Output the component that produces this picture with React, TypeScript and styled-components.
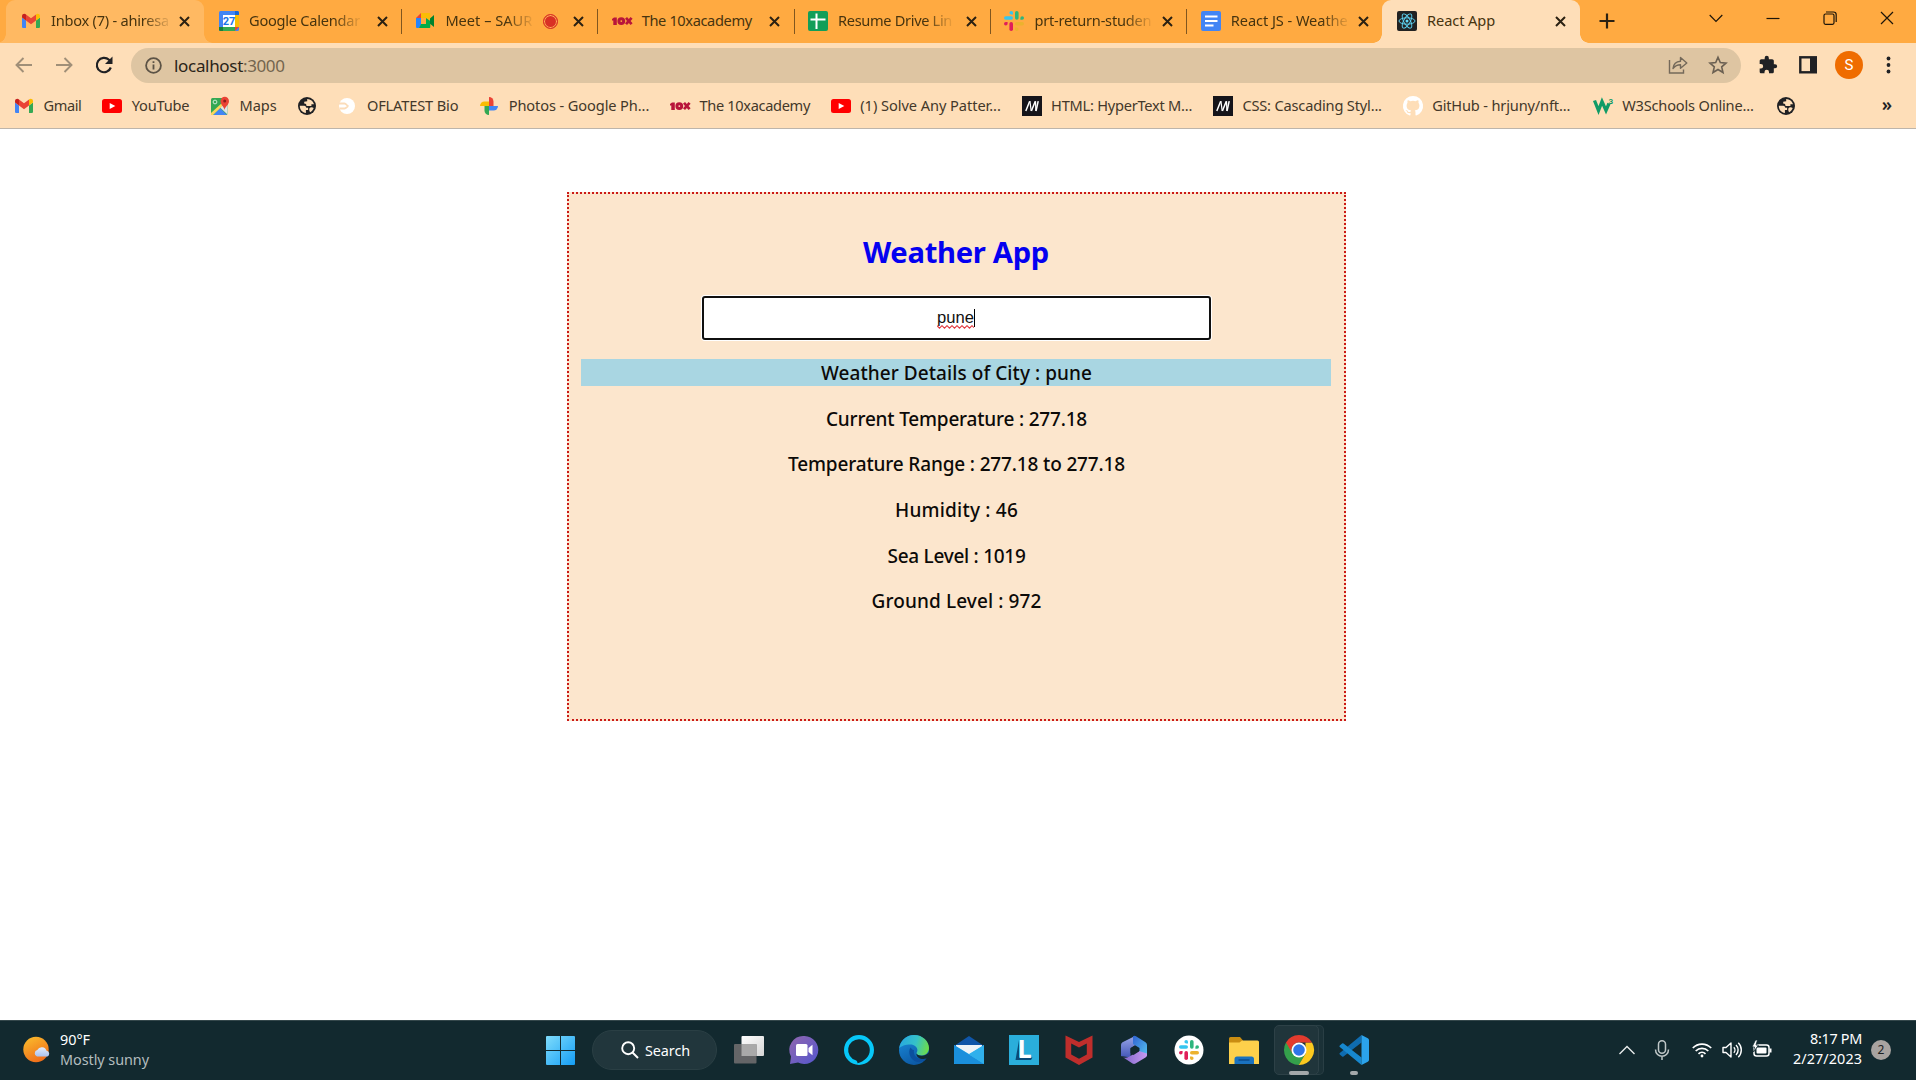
import React, { useLayoutEffect, useRef, useState } from "react";
import styled, { createGlobalStyle } from "styled-components";

const uiFont = `"Segoe UI", "Noto Sans", "Open Sans", sans-serif`;

const GlobalStyle = createGlobalStyle`
  * { box-sizing: border-box; }
  html, body { margin: 0; padding: 0; }
  body { background: #fff; font-family: ${uiFont}; overflow: hidden; }
`;

/* ---------- text that keeps a fixed measure by adjusting its tracking ---------- */

const Measure = styled.span<{ $width: number }>`
  display: block;
  flex: none;
  width: ${(p) => p.$width}px;
  white-space: nowrap;
`;

const Tracked = styled.span`
  display: inline-block;
  white-space: pre;
`;

function FitText({ children, width }: { children: string; width: number }) {
  const ref = useRef<HTMLSpanElement>(null);
  const [spacing, setSpacing] = useState(0);
  useLayoutEffect(() => {
    if (ref.current) {
      const natural = ref.current.getBoundingClientRect().width;
      setSpacing((width - natural) / children.length);
    }
  }, [children, width]);
  return (
    <Measure $width={width}>
      <Tracked ref={ref} style={{ letterSpacing: `${spacing}px` }}>
        {children}
      </Tracked>
    </Measure>
  );
}

/* ---------- site icons ---------- */

const Svg = styled.svg<{ $size: number }>`
  display: block;
  flex: none;
  overflow: visible;
  width: ${(p) => p.$size}px;
  height: ${(p) => p.$size}px;
`;

type IconName =
  | "gmail" | "calendar" | "meet" | "tenx" | "sheets" | "slack" | "docs" | "react"
  | "youtube" | "maps" | "globe" | "oflatest" | "photos" | "mdn" | "github" | "w3";

const SlackMark = () => (
  <>
    <g fill="#36c5f0">
      <rect x="0" y="5.3" width="9" height="3.5" rx="1.75" />
      <path d="M7.2 0A1.8 1.8 0 0 1 9 1.8v1.8H7.2A1.8 1.8 0 0 1 7.2 0z" />
    </g>
    <g fill="#2eb67d">
      <rect x="11" y="0" width="3.6" height="8.8" rx="1.8" />
      <path d="M20 7A1.8 1.8 0 0 1 18.2 8.8h-1.8V7A1.8 1.8 0 0 1 20 7z" />
    </g>
    <g fill="#ecb22e">
      <rect x="11" y="11" width="9" height="3.6" rx="1.8" />
      <path d="M12.8 20A1.8 1.8 0 0 1 11 18.2v-1.8h1.8a1.8 1.8 0 0 1 0 3.6z" />
    </g>
    <g fill="#e01e5a">
      <rect x="5.4" y="11" width="3.6" height="9" rx="1.8" />
      <path d="M0 12.8A1.8 1.8 0 0 1 1.8 11h1.8v1.8a1.8 1.8 0 0 1-3.6 0z" />
    </g>
  </>
);

const drawings: Record<IconName, React.ReactNode> = {
  gmail: (
    <>
      <path fill="#4285f4" d="M1 6.5v9.2c0 .7.6 1.3 1.3 1.3H5V9.5z" />
      <path fill="#34a853" d="M19 6.5v9.2c0 .7-.6 1.3-1.3 1.3H15V9.5z" />
      <path fill="#c5221f" d="M1 5.2C1 3 3.5 2.200 5 3.400V9.500L1 6.500z" />
      <path fill="#fbbc04" d="M19 5.200C19 3 16.500 2.200 15 3.400V9.500l4-3z" />
      <path fill="#ea4335" d="M5 3.400l5 3.800 5-3.800v6.100l-5 3.800-5-3.800z" />
    </>
  ),
  calendar: (
    <>
      <rect width="20" height="20" rx="1.500" fill="#4285f4" />
      <path fill="#1967d2" d="M16 0h2.500A1.500 1.500 0 0 1 20 1.500V4h-4z" />
      <path fill="#fbbc04" d="M16 4h4v12h-4z" />
      <path fill="#34a853" d="M4 16h12v4H4z" />
      <path fill="#188038" d="M0 16h4v4H1.500A1.500 1.500 0 0 1 0 18.500z" />
      <path fill="#ea4335" d="M16 16h4l-4 4z" />
      <path fill="#fff" d="M4 4h12v12H4z" />
      <text x="10" y="14" fontSize="11" fontWeight="700" fontFamily="Roboto, sans-serif" textAnchor="middle" fill="#1a73e8">27</text>
    </>
  ),
  meet: (
    <>
      <path fill="#ea4335" d="M1 7l5-5v5z" />
      <path fill="#fbbc04" d="M6 2h8a1.300 1.300 0 0 1 1.300 1.300V9L11 7H6z" />
      <path fill="#2684fc" d="M1 7h5v7l-2 3H2a1 1 0 0 1-1-1z" />
      <path fill="#00ac47" d="M6 13h5V7l4.300 3v6a1 1 0 0 1-1.300 1H4z" />
      <path fill="#00832d" d="M15 7.500l4-3.500v12l-4-3.300z" />
    </>
  ),
  tenx: (
    <>
      <path fill="#b8153a" d="M0 8l2-1.500h2.800v7.500H1.300V9.500H0z" />
      <path fill="#b8153a" fillRule="evenodd" d="M9.300 6.200a3.900 3.900 0 1 1 0 7.800 3.900 3.900 0 0 1 0-7.800zm0 3a.9.900 0 1 0 0 1.800.9.900 0 0 0 0-1.800z" />
      <path stroke="#b8153a" strokeWidth="2.700" d="M14 6.800l5.600 6.400m0-6.400L14 13.200" />
    </>
  ),
  sheets: (
    <>
      <rect width="20" height="20" rx="2" fill="#129e58" />
      <path stroke="#fff" strokeWidth="2" d="M8.500 2.500v15.500M2.500 8.500h15" />
    </>
  ),
  slack: <SlackMark />,
  docs: (
    <>
      <rect width="20" height="20" rx="2" fill="#4285f4" />
      <path stroke="#fff" strokeWidth="2" d="M4 5.500h12.500M4 10h12.500M4 14.600h8.500" />
    </>
  ),
  react: (
    <>
      <rect width="20" height="20" rx="2" fill="#222" />
      <g fill="none" stroke="#61dafb" strokeWidth=".9">
        <ellipse cx="10" cy="10" rx="8" ry="3.200" />
        <ellipse cx="10" cy="10" rx="8" ry="3.200" transform="rotate(60 10 10)" />
        <ellipse cx="10" cy="10" rx="8" ry="3.200" transform="rotate(120 10 10)" />
      </g>
      <circle cx="10" cy="10" r="1.500" fill="#61dafb" />
    </>
  ),
  youtube: (
    <>
      <rect y="3" width="20" height="14" rx="2.500" fill="#f00" />
      <path fill="#fff" d="M7.700 7l5.600 3-5.600 3z" />
    </>
  ),
  maps: (
    <>
      <rect x="1" y="2" width="16.500" height="17" rx="1.500" fill="#34a853" />
      <path fill="#4285f4" d="M3 19l7-7 7 7z" />
      <path fill="#dfe3e8" d="M10 11.500l7.500 7V9L14 8z" />
      <path fill="#fbd75b" d="M1 17L13 6l1.500 2L3 19H1z" />
      <circle cx="5" cy="6" r="1.900" fill="none" stroke="#cdeed6" strokeWidth="1" />
      <path fill="#ea4335" d="M14.500 14c-.4-3.500-4-5-4-9a4.200 4.200 0 0 1 8.500 0c0 4-4 5.500-4.500 9z" />
      <circle cx="14.700" cy="5" r="1.500" fill="#8c1d18" />
    </>
  ),
  globe: (
    <>
      <circle cx="10" cy="10" r="9" fill="#202124" />
      <path fill="#fedeb8" d="M2.800 9.800h4.400c1.400 0 2 1 2 2h1.900v2.300H8.900v2.900C5.500 16.700 2.700 13.700 2.800 9.800z" />
      <path fill="#fedeb8" d="M10.200 2.900c3.300.1 6 2.400 6.800 5.300h-2.600v1.900h-3.500c-1.600 0-2-1-1.700-2.100l-2-.5V5.700l3-.4z" />
      <path fill="#fedeb8" d="M12.500 12.300c1-1.300 2.800-1.100 4.200-.3-.6 1.900-1.900 3.400-3.600 4.300-.8-1.300-1.100-2.900-.6-4z" />
    </>
  ),
  oflatest: (
    <>
      <circle cx="10" cy="10" r="8" fill="#fff" />
      <path fill="none" stroke="#fbdcb9" strokeWidth="1.800" d="M1.500 7.500h6c2 0 2 2.300 4 2.500-1.500 0-2 2.500-4 2.500h-5" />
    </>
  ),
  photos: (
    <>
      <path fill="#ea4335" d="M10 10V1a4.500 4.500 0 0 1 4.500 4.500V10z" />
      <path fill="#4285f4" d="M10 10h9a4.500 4.500 0 0 1-4.500 4.500H10z" />
      <path fill="#34a853" d="M10 10v9a4.500 4.500 0 0 1-4.500-4.500V10z" />
      <path fill="#fbbc04" d="M10 10H1a4.500 4.500 0 0 1 4.500-4.500H10z" />
    </>
  ),
  mdn: (
    <>
      <rect width="20" height="20" fill="#15141a" />
      <g stroke="#fff">
        <path strokeWidth="1.500" d="M3.800 15L7.700 5.200M9.400 15l3.900-9.800" />
        <path strokeWidth="1.200" d="M7.900 5.200L9.200 15M13.500 5.200L13.900 15" />
        <path strokeWidth="1.500" d="M16.200 5.200L14 15" />
      </g>
    </>
  ),
  github: (
    <path
      fill="#fff"
      d="M10 0a10 10 0 0 0-3.200 19.500c.5.100.7-.2.700-.5v-1.900c-2.800.6-3.400-1.200-3.400-1.200-.4-1.100-1.100-1.400-1.100-1.400-.9-.6.100-.6.100-.6 1 .1 1.500 1 1.500 1 .9 1.600 2.400 1.100 2.900.9.100-.7.400-1.100.7-1.400-2.300-.2-4.600-1.100-4.600-4.900 0-1.100.4-2 1-2.700-.1-.2-.4-1.300.1-2.600 0 0 .8-.3 2.700 1a9.500 9.500 0 0 1 5.200 0c1.900-1.300 2.700-1 2.700-1 .5 1.300.2 2.400.1 2.600.6.700 1 1.600 1 2.700 0 3.800-2.300 4.700-4.600 4.900.4.300.7.900.7 1.900V19c0 .3.200.6.700.5A10 10 0 0 0 10 0z"
    />
  ),
  w3: (
    <>
      <path fill="none" stroke="#109b66" strokeWidth="3.300" d="M1.500 4.500l4 10L9 5.500l4 9 3-7" />
      <text x="15.500" y="7.500" fontSize="8" fontWeight="700" fontFamily="Roboto, sans-serif" fill="#109b66">3</text>
    </>
  ),
};

const SiteIcon = ({ name }: { name: IconName }) => (
  <Svg $size={20} viewBox="0 0 20 20">{drawings[name]}</Svg>
);

/* ---------- browser ---------- */

const Screen = styled.div`
  width: 1916px;
  height: 1080px;
  display: flex;
  flex-direction: column;
  overflow: hidden;
  background: #fff;
`;

const TabStrip = styled.div`
  height: 43px;
  flex: none;
  display: flex;
  padding-left: 5px;
  background: #ffaa41;
`;

const Tab = styled.div<{ $tone?: string }>`
  width: 196.350px;
  flex: none;
  height: 43px;
  display: flex;
  align-items: center;
  position: relative;
  padding: 0 0 1px 16px;
  font-size: 14.600px;
  line-height: 20px;
  color: #47340f;
  isolation: isolate;

  &:first-child { margin-right: 1.700px; }

  &::before {
    content: "";
    display: ${(p) => (p.$tone ? "block" : "none")};
    position: absolute;
    z-index: -1;
    inset: 0 -3px 0 1px;
    border-radius: 9px 9px 0 0;
    background: ${(p) => p.$tone};
  }
  &::after {
    content: "";
    display: ${(p) => (p.$tone ? "block" : "none")};
    position: absolute;
    z-index: -1;
    left: -8px;
    right: -12px;
    bottom: 0;
    height: 9px;
    background:
      radial-gradient(circle at 0 0, transparent 8.500px, ${(p) => p.$tone} 9px) left / 9px 9px no-repeat,
      radial-gradient(circle at 100% 0, transparent 8.500px, ${(p) => p.$tone} 9px) right / 9px 9px no-repeat;
  }
`;

const TabTitle = styled.div<{ $faded?: boolean }>`
  margin-left: 10px;
  padding-bottom: 2px;
  mask-image: ${(p) => (p.$faded ? "linear-gradient(to right, #000 calc(100% - 26px), rgba(0, 0, 0, 0.1))" : "none")};
`;

const RecordingDot = styled.span`
  width: 15px;
  height: 15px;
  flex: none;
  margin-left: 11px;
  border: 1.500px solid #d93025;
  border-radius: 50%;
  background: #d93025;
  box-shadow: inset 0 0 0 1px #ffb45a;
`;

const TabClose = styled.span`
  margin-left: auto;
  margin-right: 11.800px;
  display: flex;
`;

const TabDivider = styled.i`
  width: 1px;
  height: 25px;
  margin: 0 -2.500px 0 1.500px;
  background: #80561f;
`;

const NewTab = styled.div`
  display: flex;
  align-items: center;
  margin-left: 21.500px;
  padding-bottom: 1px;
`;

const WindowControls = styled.div`
  margin-left: auto;
  display: flex;
  align-items: center;
  gap: 43px;
  padding: 0 22px 7px 0;
`;

const Toolbar = styled.div`
  height: 45px;
  flex: none;
  display: flex;
  align-items: center;
  padding: 0 0 1px 14px;
  background: #fedeb8;
`;

const NavIcons = styled.div`
  width: 117px;
  display: flex;
  align-items: center;
  gap: 20px;
`;

const AddressBar = styled.div`
  width: 1610px;
  height: 35px;
  display: flex;
  align-items: center;
  padding: 0 13px 0 14px;
  border-radius: 18px;
  background: #dec5a2;
`;

const Address = styled.div`
  display: flex;
  margin-left: 12px;
  padding-top: 1px;
  font-size: 17px;
  line-height: 24px;
  color: #2a2419;
`;

const Port = styled.span`
  color: #74654f;
`;

const AddressActions = styled.div`
  display: flex;
  align-items: center;
  gap: 20px;
  margin-left: auto;
`;

const ToolbarActions = styled.div`
  display: flex;
  align-items: center;
  gap: 20px;
  margin-left: 17px;
`;

const Avatar = styled.div`
  width: 28px;
  height: 28px;
  margin: 0 -3px 0 -3px;
  border-radius: 50%;
  background: #ef6c00;
  color: #fff;
  font: 15px/28px Roboto, sans-serif;
  text-align: center;
`;

const BookmarkBar = styled.div`
  height: 41px;
  flex: none;
  display: flex;
  align-items: center;
  padding: 0 24px 5px 14px;
  border-bottom: 1px solid #bdb5ab;
  background: #fedeb8;
  font-size: 14.600px;
  line-height: 20px;
  color: #43382a;
`;

const Bookmark = styled.div<{ $gap?: number }>`
  display: flex;
  align-items: center;
  gap: 9.500px;
  margin-right: ${(p) => p.$gap ?? 20.8}px;
`;

const BookmarkLabel = styled.div`
  padding-bottom: 1px;
`;

const More = styled.span`
  margin-left: auto;
  font-size: 18px;
  font-weight: 600;
  padding-bottom: 4px;
  color: #202124;
`;

type TabData = { icon: IconName; title: string; width: number; faded?: boolean; tone?: string; recording?: boolean; divider?: boolean };

const tabs: TabData[] = [
  { icon: "gmail", title: "Inbox (7) - ahiresa", width: 118, faded: true, tone: "#ffb962" },
  { icon: "calendar", title: "Google Calendar", width: 111, faded: true, divider: true },
  { icon: "meet", title: "Meet – SAUR", width: 87, faded: true, divider: true, recording: true },
  { icon: "tenx", title: "The 10xacademy", width: 110, divider: true },
  { icon: "sheets", title: "Resume Drive Lin", width: 114, faded: true, divider: true },
  { icon: "slack", title: "prt-return-studen", width: 117, faded: true, divider: true },
  { icon: "docs", title: "React JS - Weathe", width: 117, faded: true },
  { icon: "react", title: "React App", width: 68, tone: "#fedeb8" },
];

type BookmarkData = { icon: IconName; label?: string; width?: number; gap?: number };

const bookmarks: BookmarkData[] = [
  { icon: "gmail", label: "Gmail", width: 38 },
  { icon: "youtube", label: "YouTube", width: 57.5 },
  { icon: "maps", label: "Maps", width: 37 },
  { icon: "globe", gap: 20 },
  { icon: "oflatest", label: "OFLATEST Bio", width: 91.5 },
  { icon: "photos", label: "Photos - Google Ph...", width: 140.5 },
  { icon: "tenx", label: "The 10xacademy", width: 110.5 },
  { icon: "youtube", label: "(1) Solve Any Patter...", width: 140.5 },
  { icon: "mdn", label: "HTML: HyperText M...", width: 141 },
  { icon: "mdn", label: "CSS: Cascading Styl...", width: 139.5 },
  { icon: "github", label: "GitHub - hrjuny/nft...", width: 138, gap: 22.5 },
  { icon: "w3", label: "W3Schools Online...", width: 131.5, gap: 22 },
  { icon: "globe" },
];

const Cross = () => (
  <Svg $size={11} viewBox="0 0 11 11">
    <path stroke="#2b2112" strokeWidth="2" d="M1 1l9 9m0-9l-9 9" />
  </Svg>
);

const glyphLine = { fill: "none", stroke: "#1d1509", strokeWidth: 1.2 };

function BrowserChrome() {
  return (
    <header>
      <TabStrip>
        {tabs.map((t) => (
          <Tab key={t.title} $tone={t.tone}>
            <SiteIcon name={t.icon} />
            <TabTitle $faded={t.faded}>
              <FitText width={t.width}>{t.title}</FitText>
            </TabTitle>
            {t.recording && <RecordingDot />}
            <TabClose><Cross /></TabClose>
            {t.divider && <TabDivider />}
          </Tab>
        ))}
        <NewTab>
          <Svg $size={16} viewBox="0 0 16 16">
            <path stroke="#2b2112" strokeWidth="2.200" d="M8 .5v15M.5 8h15" />
          </Svg>
        </NewTab>
        <WindowControls>
          <Svg $size={14} viewBox="0 0 14 14" {...glyphLine}>
            <path d="M.7 4l6.300 6.300L13.300 4" />
          </Svg>
          <Svg $size={14} viewBox="0 0 14 14" {...glyphLine}>
            <path d="M.5 7.500h13" />
          </Svg>
          <Svg $size={14} viewBox="0 0 14 14" {...glyphLine}>
            <rect x="1" y="3" width="10" height="10.300" rx="1.500" />
            <path d="M3 1h7.500A2.700 2.700 0 0 1 13.200 3.700V11" />
          </Svg>
          <Svg $size={14} viewBox="0 0 14 14" {...glyphLine}>
            <path d="M1 1l12 12m0-12L1 13" />
          </Svg>
        </WindowControls>
      </TabStrip>

      <Toolbar>
        <NavIcons>
          <Svg $size={20} viewBox="0 0 20 20" fill="none" stroke="#a08f78" strokeWidth="1.900">
            <path d="M18 10H3M9.500 3L2.500 10l7 7" />
          </Svg>
          <Svg $size={20} viewBox="0 0 20 20" fill="none" stroke="#a08f78" strokeWidth="1.900">
            <path d="M2 10h15M10.500 3l7 7-7 7" />
          </Svg>
          <Svg $size={20} viewBox="0 0 20 20" fill="none" stroke="#202124" strokeWidth="2.200">
            <path d="M16.800 12.500A7.200 7.200 0 1 1 15 4.800L17 7" />
            <path fill="#202124" stroke="none" d="M18.500 1.500v7.500H11z" />
          </Svg>
        </NavIcons>
        <AddressBar>
          <Svg $size={17} viewBox="0 0 17 17" fill="none" stroke="#5c5346" strokeWidth="1.800">
            <circle cx="8.500" cy="8.500" r="7.400" />
            <path d="M8.500 7.500v5M8.500 4.200v1.900" />
          </Svg>
          <Address>
            <FitText width={69}>localhost</FitText>
            <Port><FitText width={41.5}>:3000</FitText></Port>
          </Address>
          <AddressActions>
            <Svg $size={20} viewBox="0 0 20 20" fill="none" stroke="#74695a" strokeWidth="1.400">
              <path d="M1.500 5v13h14v-3.500" />
              <path strokeLinejoin="round" d="M5 13.500C5.500 9 8 6.500 12.500 6.200V2.500L18.800 8l-6.300 5.300V9.800C9 9.800 7 11 5 13.500z" />
            </Svg>
            <Svg $size={20} viewBox="0 0 20 20" fill="none" stroke="#6b6052" strokeWidth="1.600">
              <path d="M10 2.300l2.300 5.300 5.700.5-4.300 3.800 1.300 5.600-5-3-5 3 1.300-5.600L2 8.100l5.700-.5z" />
            </Svg>
          </AddressActions>
        </AddressBar>
        <ToolbarActions>
          <Svg $size={20} viewBox="0 0 24 24" fill="#202124">
            <path d="M20.500 11H19V7c0-1.100-.9-2-2-2h-4V3.500a2.500 2.500 0 0 0-5 0V5H4c-1.100 0-2 .9-2 2v3.800h1.500a2.700 2.700 0 0 1 0 5.400H2V20c0 1.100.9 2 2 2h3.800v-1.500a2.700 2.700 0 0 1 5.400 0V22H17c1.100 0 2-.9 2-2v-4h1.500a2.500 2.500 0 0 0 0-5z" />
          </Svg>
          <Svg $size={20} viewBox="0 0 20 20">
            <rect x="2.300" y="2.300" width="15.500" height="15" fill="none" stroke="#202124" strokeWidth="2.400" />
            <path fill="#202124" d="M12 2h6v16h-6z" />
          </Svg>
          <Avatar>S</Avatar>
          <Svg $size={18} viewBox="0 0 18 18" fill="#202124">
            <circle cx="8.500" cy="2.500" r="1.900" />
            <circle cx="8.500" cy="9" r="1.900" />
            <circle cx="8.500" cy="15.500" r="1.900" />
          </Svg>
        </ToolbarActions>
      </Toolbar>

      <BookmarkBar>
        {bookmarks.map((b, i) => (
          <Bookmark key={i} $gap={b.gap}>
            <SiteIcon name={b.icon} />
            {b.label && (
              <BookmarkLabel>
                <FitText width={b.width!}>{b.label}</FitText>
              </BookmarkLabel>
            )}
          </Bookmark>
        ))}
        <More>»</More>
      </BookmarkBar>
    </header>
  );
}

/* ---------- weather page ---------- */

const Page = styled.main`
  flex: 1;
  display: flex;
  justify-content: center;
  align-items: flex-start;
  padding: 63px 3px 0 0;
`;

const Card = styled.section`
  width: 779px;
  height: 529px;
  display: flex;
  flex-direction: column;
  align-items: center;
  padding: 0 13px 0 12px;
  border: 2px dotted #cb1a17;
  background: #fce6cd;
`;

const Heading = styled.h1`
  margin: 37px 0 0;
  font-size: 29.200px;
  line-height: 43px;
  font-weight: 700;
  color: #0400f0;
`;

const CityField = styled.div`
  width: 509px;
  height: 44px;
  margin-top: 22px;
  display: flex;
  align-items: center;
  justify-content: center;
  border: 2px solid #101010;
  border-radius: 3px;
  box-shadow: 0 0 0 1px #fff;
  background: #fff;
  font-family: "Liberation Sans", Arial, sans-serif;
  font-size: 16.600px;
  line-height: 18px;
  color: #111;
`;

const CityText = styled.span`
  position: relative;
  display: block;
  border-right: 1px solid #000;
`;

const Squiggle = styled.svg`
  position: absolute;
  left: 0;
  bottom: -2px;
  width: 37px;
  height: 4px;
`;

const Details = styled.div`
  width: 750px;
  margin-top: 19px;
  display: flex;
  flex-direction: column;
  gap: 18.700px;
`;

const Detail = styled.div<{ $highlight?: boolean }>`
  height: 27px;
  display: flex;
  justify-content: center;
  padding: 1px 0 0 1px;
  background: ${(p) => (p.$highlight ? "#a9d6e2" : "transparent")};
  font-size: 19px;
  line-height: 27.500px;
  font-weight: 500;
  color: #0c0a08;
`;

const details = [
  { text: "Weather Details of City : pune", width: 271 },
  { text: "Current Temperature : 277.18", width: 261 },
  { text: "Temperature Range : 277.18 to 277.18", width: 337 },
  { text: "Humidity : 46", width: 123 },
  { text: "Sea Level : 1019", width: 138 },
  { text: "Ground Level : 972", width: 170 },
];

function WeatherPage() {
  return (
    <Page>
      <Card>
        <Heading><FitText width={186}>Weather App</FitText></Heading>
        <CityField>
          <CityText>
            pune
            <Squiggle viewBox="0 0 37 4" fill="none" stroke="#e0393e" strokeWidth="1.100">
              <path d="M0 .7l2.500 2.500L5 .7l2.500 2.500L10 .7l2.500 2.500L15 .7l2.500 2.500L20 .7l2.500 2.500L25 .7l2.500 2.500L30 .7l2.500 2.500L35 .7l2 2" />
            </Squiggle>
          </CityText>
        </CityField>
        <Details>
          {details.map((d, i) => (
            <Detail key={d.text} $highlight={i === 0}>
              <FitText width={d.width}>{d.text}</FitText>
            </Detail>
          ))}
        </Details>
      </Card>
    </Page>
  );
}

/* ---------- taskbar ---------- */

const Taskbar = styled.footer`
  height: 60px;
  flex: none;
  display: grid;
  grid-template-columns: 533px 1fr 326px;
  align-items: center;
  padding-bottom: 1px;
  border-top: 1px solid #34474b;
  background: #12292f;
  color: #fff;
  font-size: 14.400px;
`;

const WeatherWidget = styled.div`
  display: flex;
  align-items: center;
  gap: 9px;
  padding-left: 23px;
  line-height: 20px;
`;

const WeatherText = styled.div`
  padding-bottom: 1px;
`;

const Muted = styled.div`
  color: #b3bdbf;
`;

const Apps = styled.div`
  display: flex;
  align-items: center;
`;

const AppSlot = styled.div`
  width: 55px;
  height: 50px;
  flex: none;
  display: flex;
  align-items: center;
  justify-content: center;
  position: relative;
`;

const ActivePlate = styled.span`
  position: absolute;
  left: 3px;
  top: 0;
  width: 45px;
  height: 50px;
  border: 1px solid #2d4147;
  border-radius: 5px;
  background: #20353b;
  box-shadow: 5px 0 0 -1px #1b3137, 5px 0 0 0 #293e44;
`;

const RunningBar = styled.i<{ $width: number }>`
  position: absolute;
  bottom: 0;
  left: calc(50% - ${(p) => p.$width / 2}px);
  width: ${(p) => p.$width}px;
  height: 4px;
  border-radius: 2px;
  background: #a3a8aa;
`;

const AppIcon = styled(Svg)`
  position: relative;
`;

const SearchBox = styled.div`
  width: 125px;
  height: 40px;
  margin: 0 4px;
  display: flex;
  align-items: center;
  gap: 6px;
  padding-left: 28px;
  border: 1px solid #2a3f44;
  border-radius: 20px;
  background: #21363c;
`;

const Tray = styled.div`
  display: flex;
  align-items: center;
  gap: 10px;
  padding-left: 28px;
`;

const TraySlot = styled.div<{ $before?: number }>`
  margin-left: ${(p) => p.$before ?? 0}px;
`;

const Clock = styled.div`
  width: 80px;
  display: flex;
  flex-direction: column;
  align-items: flex-end;
  padding-bottom: 2px;
  line-height: 20px;
`;

const Badge = styled.div`
  width: 20px;
  height: 20px;
  margin-left: -1px;
  border-radius: 50%;
  background: #a8a3a0;
  color: #1c2022;
  font-size: 12px;
  line-height: 20px;
  text-align: center;
`;

const SunIcon = () => (
  <Svg $size={28} viewBox="0 0 28 28">
    <defs>
      <linearGradient id="sun" x1="0" y1="0" x2=".5" y2="1">
        <stop stopColor="#fbc02d" /><stop offset="1" stopColor="#f0701b" />
      </linearGradient>
      <linearGradient id="cloud" x1="0" y1="0" x2="0" y2="1">
        <stop stopColor="#e4edfb" /><stop offset="1" stopColor="#a9c1ee" />
      </linearGradient>
    </defs>
    <circle cx="13" cy="13.500" r="12.700" fill="url(#sun)" />
    <path fill="url(#cloud)" d="M14 20.500a3.400 3.400 0 0 1 .3-6.500 5 5 0 0 1 9.300.8 3 3 0 0 1 .9 5.700z" />
  </Svg>
);

const apps: { id: string; art: React.ReactNode; running?: number; active?: boolean }[] = [
  {
    id: "task-view",
    art: (
      <>
        <defs>
          <linearGradient id="tv" x1="0" y1="0" x2="1" y2="1"><stop stopColor="#fff" /><stop offset="1" stopColor="#d5d5d5" /></linearGradient>
        </defs>
        <rect x="7.500" y="1" width="22.500" height="20" rx="1" fill="url(#tv)" />
        <rect x="0" y="9" width="22.500" height="19.500" rx="1" fill="#646567" />
        <path fill="#a9a9a9" d="M7.500 9h15v12h-15z" />
      </>
    ),
  },
  {
    id: "chat",
    art: (
      <>
        <defs>
          <linearGradient id="chat" x1="0" y1="0" x2="1" y2="1"><stop stopColor="#9166ae" /><stop offset="1" stopColor="#5457cf" /></linearGradient>
        </defs>
        <path fill="url(#chat)" d="M15.500 1A14 14 0 1 1 9 27.500L1 29l1-7.500A14 14 0 0 1 15.500 1z" />
        <rect x="7" y="9" width="11.500" height="12" rx="1.500" fill="#fff" />
        <path fill="#fff" d="M19.500 13l4-3.200v10.500l-4-3.300z" />
      </>
    ),
  },
  {
    id: "alexa",
    art: (
      <path
        fill="#07c8f9"
        fillRule="evenodd"
        d="M15 0a15 15 0 1 1 0 30A15 15 0 0 1 15 0zm0 4.200a10.800 10.800 0 0 0-3.300 21.100c1.300.4 1.800 1.600 1.800 3 6.500-1.800 12.300-6.500 12.300-13.300A10.800 10.800 0 0 0 15 4.200z"
      />
    ),
  },
  {
    id: "edge",
    art: (
      <>
        <defs>
          <linearGradient id="edgeTop" x1="0" y1=".3" x2="1" y2=".5"><stop stopColor="#27a8e0" /><stop offset=".55" stopColor="#35c1c8" /><stop offset="1" stopColor="#6cdc4b" /></linearGradient>
          <linearGradient id="edgeLow" x1="0" y1="0" x2=".5" y2="1"><stop stopColor="#1b8ede" /><stop offset="1" stopColor="#0c59a4" /></linearGradient>
        </defs>
        <circle cx="15" cy="15" r="15" fill="url(#edgeLow)" />
        <path fill="url(#edgeTop)" d="M.2 13.500C1.200 5.500 7.500 0 15 0c9 0 15 6.500 15 13 0 5-4 7.500-7.500 7.500s-5-1.500-5-2.300.9-1.200.9-3.200c0-3-3.200-5.500-7-5.500C6.500 9.500 2 11 .2 13.500z" />
        <path fill="#0b4f9e" d="M11.500 12.500c-3 4.500-.5 13 7 14.500 4 .6 7.500-1.500 8.800-3.500-6 2.500-13.800-1.500-12.300-8.500-1 .8-2.500-1.500-3.500-2.500z" />
        <path fill="#12292f" d="M17.500 18.200c.2 1.500 2.500 2.500 5 2.500 3.500 0 6-1.500 7.800-3.700-.5 3-1.500 5.300-2.700 6.500-5 1.500-10.600-.5-10.100-5.300z" />
      </>
    ),
  },
  {
    id: "mail",
    art: (
      <>
        <path fill="#0f55a8" d="M0 11L15 1l15 10v5H0z" />
        <path fill="#eef3f7" d="M2 10h26v8l-13 6-13-8z" />
        <path fill="#35b5ee" d="M0 10l15 9 15-9v19H0z" />
        <path fill="#1a8fdc" d="M0 10l30 19H1a1 1 0 0 1-1-1z" />
        <path fill="#30b0ec" d="M15 19.500L30 10v18.500z" />
      </>
    ),
  },
  {
    id: "lenovo",
    art: (
      <>
        <rect width="30" height="30" fill="#2aaedb" />
        <path fill="#0a4a78" d="M10 5L6.500 25h15.500l1.500-2.500H10z" />
        <text x="8.500" y="22.500" fontFamily="Open Sans, sans-serif" fontSize="25" fontWeight="700" fill="#fff">L</text>
      </>
    ),
  },
  {
    id: "mcafee",
    art: <path fill="#bf2e2c" fillRule="evenodd" d="M1.500.5L15 7 28.500.5v22L15 30 1.500 22.500zM7.200 8.500V19.500L15 23.800l7.800-4.300V8.500L15 12.400z" />,
  },
  {
    id: "m365",
    art: (
      <>
        <defs>
          <linearGradient id="ma" x1="0" y1="0" x2="0" y2="1"><stop stopColor="#9aa6e8" /><stop offset="1" stopColor="#4357b8" /></linearGradient>
          <linearGradient id="mb" x1="0" y1="0" x2="1" y2="1"><stop stopColor="#2f63d4" /><stop offset="1" stopColor="#56c2ee" /></linearGradient>
          <linearGradient id="mc" x1="0" y1="0" x2="1" y2="0"><stop stopColor="#7a62c8" /><stop offset="1" stopColor="#c79af0" /></linearGradient>
        </defs>
        <path fill="url(#ma)" d="M16 1L3.500 7.300A3 3 0 0 0 2 10v11l9.500 1.500v-9L17 9.500z" />
        <path fill="url(#mb)" d="M14 1.300a3 3 0 0 1 3 0l9.500 6A3 3 0 0 1 28 10v11l-7.500-2v-6L14 9z" />
        <path fill="url(#mc)" d="M2 21c2 2 5 2.500 8 .8l10-5.800 8 2.500V20a3 3 0 0 1-1.500 2.600L16.500 28.500a3 3 0 0 1-3 0z" />
        <path fill="#12292f" d="M11.500 13l4-2.300 4.500 2.500v3.300L14.500 20l-3-2z" />
      </>
    ),
  },
  {
    id: "slack",
    art: (
      <>
        <circle cx="15" cy="15" r="14.500" fill="#fff" />
        <g transform="translate(5 5)"><SlackMark /></g>
      </>
    ),
  },
  {
    id: "explorer",
    art: (
      <>
        <path fill="#c98d12" d="M0 3.500A1.500 1.500 0 0 1 1.500 2H11l3 3.500-3 3H0z" />
        <path fill="#fdd04b" d="M0 7.500h10.500L13 5.500h15.500A1.500 1.500 0 0 1 30 7v22H0z" />
        <path fill="#1a72bf" d="M5.500 29v-5a2.500 2.500 0 0 1 2.500-2.500h14.500A2.500 2.500 0 0 1 25 24v5z" />
        <path stroke="#0c4c8c" strokeWidth="1.500" d="M9.500 25h11" />
      </>
    ),
  },
  {
    id: "chrome",
    active: true,
    running: 20,
    art: (
      <>
        <path fill="#34a04b" d="M2 7.500a15 15 0 0 0 12.800 22.500L21.500 18.700 15 15z" />
        <path fill="#fcc91f" d="M28 7.500a15 15 0 0 1-13.200 22.500L21.500 18.700 21.500 7.500z" />
        <path fill="#e33b2e" d="M15 0a15 15 0 0 1 13 7.500H15a7.500 7.500 0 0 0-6.500 11.200L2 7.500A15 15 0 0 1 15 0z" />
        <circle cx="15" cy="15" r="7.500" fill="#fff" />
        <circle cx="15" cy="15" r="5.800" fill="#2f75e8" />
      </>
    ),
  },
  {
    id: "vscode",
    running: 8,
    art: (
      <>
        <path fill="#0f6cb0" d="M22.500 7.500L4.500 21.500a1 1 0 0 1-1.400 0L.8 19.400a1 1 0 0 1 0-1.500L22.500 0z" />
        <path fill="#1788cf" d="M22.500 22.500L4.500 8.500a1 1 0 0 0-1.400 0L.8 10.600a1 1 0 0 0 0 1.500L22.500 30z" />
        <path fill="#2ba3ec" d="M22.500 0L28.800 3.300A2 2 0 0 1 30 5v20a2 2 0 0 1-1.200 1.700L22.500 30z" />
      </>
    ),
  },
];

function WindowsTaskbar() {
  return (
    <Taskbar>
      <WeatherWidget>
        <SunIcon />
        <WeatherText>
          <FitText width={30}>90°F</FitText>
          <Muted><FitText width={89}>Mostly sunny</FitText></Muted>
        </WeatherText>
      </WeatherWidget>

      <Apps>
        <AppSlot>
          <Svg $size={29} viewBox="0 0 29 29">
            <defs>
              <linearGradient id="win" gradientUnits="userSpaceOnUse" x1="0" y1="0" x2="29" y2="29"><stop stopColor="#7fdcfb" /><stop offset="1" stopColor="#149df5" /></linearGradient>
            </defs>
            <path fill="url(#win)" d="M1 0h13v14H0V1a1 1 0 0 1 1-1zM15 0h13a1 1 0 0 1 1 1v13H15zM0 15h14v14H1a1 1 0 0 1-1-1zM15 15h14v13a1 1 0 0 1-1 1H15z" />
          </Svg>
        </AppSlot>
        <SearchBox>
          <Svg $size={18} viewBox="0 0 18 18" fill="none" stroke="#fff" strokeWidth="1.900">
            <circle cx="7.200" cy="7.200" r="6" />
            <path d="M11.500 11.500l5.500 5.500" />
          </Svg>
          <FitText width={45}>Search</FitText>
        </SearchBox>
        {apps.map((a) => (
          <AppSlot key={a.id}>
            {a.active && <ActivePlate />}
            <AppIcon $size={30} viewBox="0 0 30 30">{a.art}</AppIcon>
            {a.running && <RunningBar $width={a.running} />}
          </AppSlot>
        ))}
      </Apps>

      <Tray>
        <Svg $size={18} viewBox="0 0 18 18" fill="none" stroke="#e8ecec" strokeWidth="1.400">
          <path d="M1.500 13L9 5.500l7.500 7.500" />
        </Svg>
        <TraySlot $before={6}>
          <Svg $size={20} viewBox="0 0 20 20" fill="none" stroke="#bfc7c8" strokeWidth="1.500">
            <rect x="6.500" y=".8" width="7" height="12.500" rx="3.500" />
            <path d="M3.500 9.500c0 9 13 9 13 0M10 16.200V20" />
          </Svg>
        </TraySlot>
        <TraySlot $before={10}>
          <Svg $size={20} viewBox="0 0 20 20" fill="none" stroke="#fff" strokeWidth="1.700">
            <path d="M.8 8c5-5.300 13.400-5.300 18.400 0M3.700 11c3.500-3.600 9.100-3.600 12.600 0M6.500 13.800c2-2 5-2 7 0" />
            <circle cx="10" cy="16" r="1.400" fill="#fff" stroke="none" />
          </Svg>
        </TraySlot>
        <Svg $size={20} viewBox="0 0 20 20" fill="none" stroke="#fff" strokeWidth="1.400">
          <path strokeLinejoin="round" d="M1 7.500h3L9 3v14l-5-4.500H1z" />
          <path d="M11.800 7.300c1.500 1.500 1.500 4 0 5.500M14 5c2.800 2.800 2.800 7.200 0 10M16.300 2.800c4 4 4 10.400 0 14.400" />
        </Svg>
        <Svg $size={20} viewBox="0 0 20 20">
          <rect x="2" y="5" width="15" height="11" rx="2.500" fill="none" stroke="#fff" strokeWidth="1.500" />
          <rect x="4.500" y="7.500" width="10" height="6" rx="1" fill="#fff" />
          <path stroke="#fff" strokeWidth="2" d="M18.500 8.500v4" />
          <path fill="#fff" stroke="#12292f" strokeWidth=".8" d="M3.500 0L0 7h2.500L1.500 12 6.500 5H4L5.500 0z" />
        </Svg>
        <Clock>
          <FitText width={52}>8:17 PM</FitText>
          <FitText width={69}>2/27/2023</FitText>
        </Clock>
        <Badge>2</Badge>
      </Tray>
    </Taskbar>
  );
}

export default function App() {
  return (
    <Screen>
      <GlobalStyle />
      <BrowserChrome />
      <WeatherPage />
      <WindowsTaskbar />
    </Screen>
  );
}
